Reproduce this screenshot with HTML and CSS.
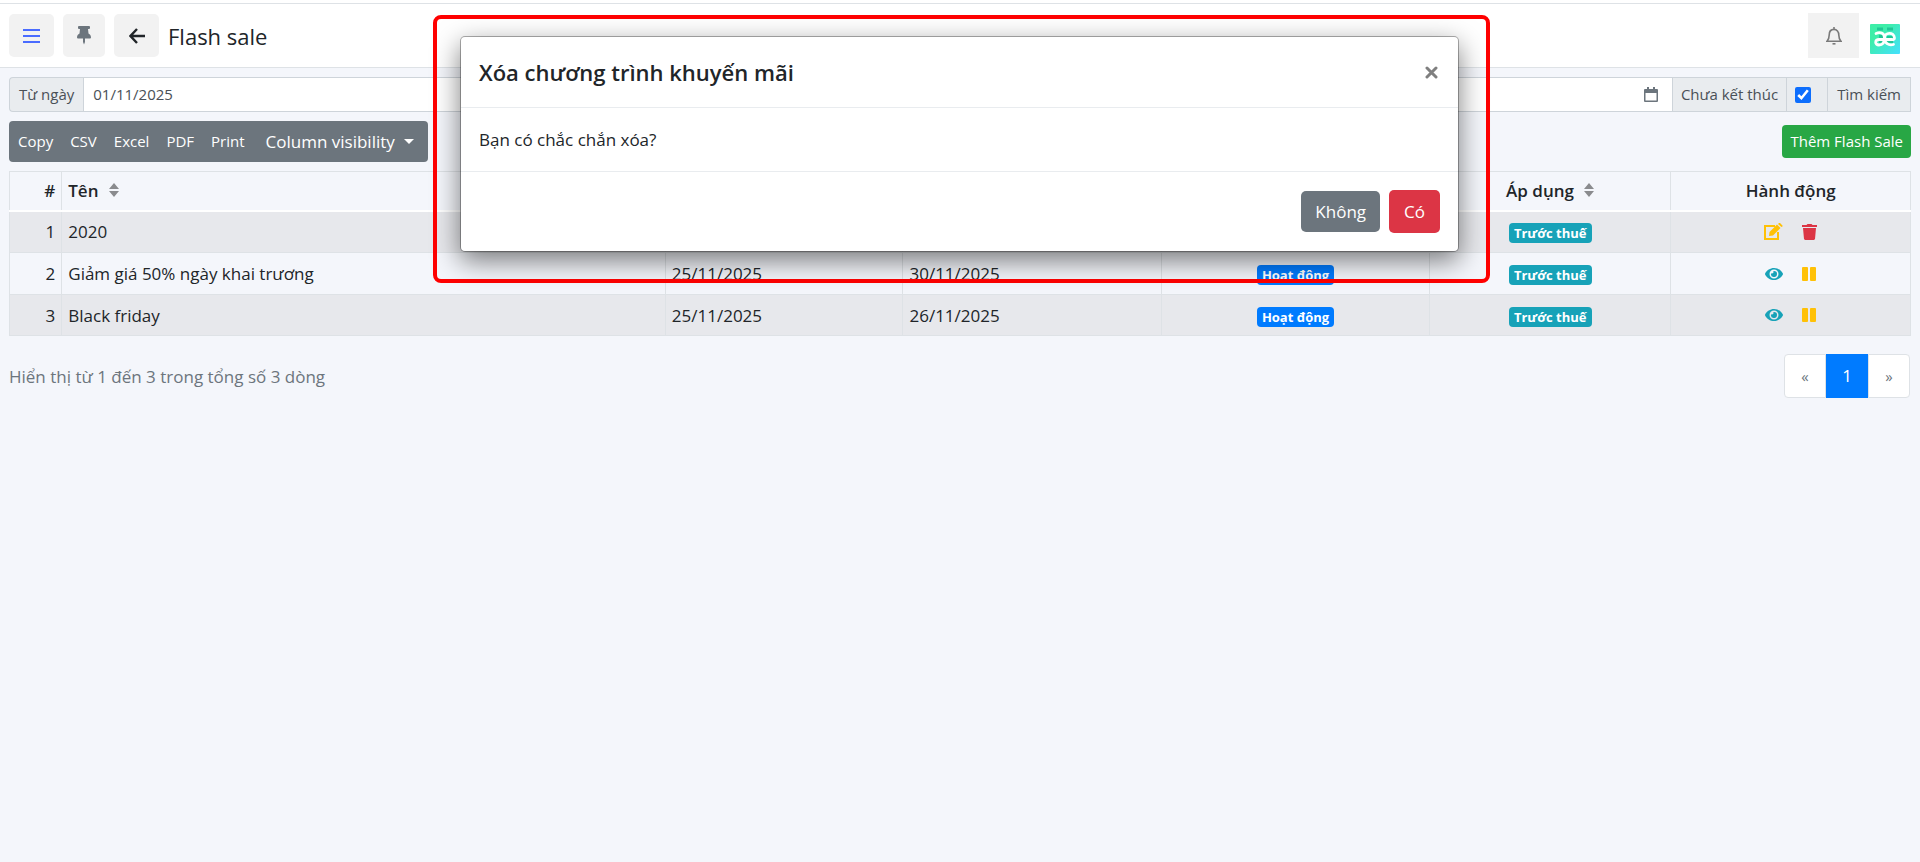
FILE: index.html
```
<!DOCTYPE html>
<html lang="vi">
<head>
    <meta charset="UTF-8">
    <meta name="viewport" content="width=device-width, initial-scale=1.0">
    <title>Flash sale</title>
    <link rel="stylesheet" href="styles.css">
</head>
<body>

<svg class="sprite" aria-hidden="true">
    <symbol id="icon-sort" viewBox="0 0 10 14">
        <path d="M5 0l5 6H0zM5 14l5-6H0z"/>
    </symbol>
    <symbol id="icon-eye" viewBox="0 0 576 512">
        <path d="M572.5 241.4C518.3 135.6 410.9 64 288 64S57.7 135.6 3.5 241.4a32.4 32.4 0 0 0 0 29.2C57.7 376.4 165.1 448 288 448s230.3-71.6 284.5-177.4a32.4 32.4 0 0 0 0-29.2zM288 400a144 144 0 1 1 144-144 143.9 143.9 0 0 1-144 144zm0-240a95.3 95.3 0 0 0-25.3 3.8 47.9 47.9 0 0 1-66.9 66.9A95.8 95.8 0 1 0 288 160z"/>
    </symbol>
    <symbol id="icon-pause" viewBox="0 0 14 14">
        <rect width="6" height="14" rx="1"/>
        <rect x="8" width="6" height="14" rx="1"/>
    </symbol>
</svg>

<header class="topbar">
    <button type="button" class="icon-btn menu-btn" aria-label="Menu">
        <svg width="17" height="16" viewBox="0 0 17 16"><path d="M0 2h17M0 8h17M0 14h17" stroke="#4a6cff" stroke-width="2"/></svg>
    </button>
    <button type="button" class="icon-btn pin-btn" aria-label="Ghim">
        <svg width="14" height="19" viewBox="0 0 14 19"><path d="M2 0h10a1 1 0 0 1 1 1v1a1 1 0 0 1-1 1h-1l.5 4.500C13 8.300 14 9.700 14 11.500a1 1 0 0 1-1 1H8V16l-1 2.500L6 16v-3.500H1a1 1 0 0 1-1-1C0 9.700 1 8.300 2.500 7.500L3 3H2a1 1 0 0 1-1-1V1a1 1 0 0 1 1-1z"/></svg>
    </button>
    <button type="button" class="icon-btn back-btn" aria-label="Quay lại">
        <svg class="outline" width="16" height="16" viewBox="0 0 16 16" stroke-width="2.4"><path d="M8 1L1.500 8 8 15M1.500 8H16"/></svg>
    </button>
    <h1 class="page-title">Flash sale</h1>
    <div class="topbar-right">
        <button type="button" class="icon-btn bell-btn" aria-label="Thông báo">
            <svg class="outline" width="16" height="18" viewBox="0 0 16 18" stroke-width="1.6"><path d="M8 0v2M1 14.200h14c-1.500-1.500-2.200-2.700-2.200-6.200 0-3.400-2-5.600-4.800-5.600S3.200 4.600 3.200 8c0 3.500-.7 4.700-2.200 6.200z"/><path d="M6.500 16.800h3"/></svg>
        </button>
        <a href="#" class="avatar" aria-label="Tài khoản">
            <svg width="30" height="30" viewBox="0 0 30 30">
                <defs>
                    <linearGradient id="avatar-bg" x1="0" y1="0" x2="1" y2="1">
                        <stop offset="0.3" stop-color="#3deea8"/>
                        <stop offset="1" stop-color="#45e0ff"/>
                    </linearGradient>
                </defs>
                <rect width="30" height="30" rx="1" fill="url(#avatar-bg)"/>
                <path d="M7 3.500h6v3H7zM17 3.500h6v3h-6zM9 11h4v8H9zM17 12h6v7h-6z" fill="#1fc795"/>
                <g fill="none" stroke="#fff" stroke-width="2.800" stroke-linecap="round">
                    <path d="M6 9.500c5-2 8.500 0 8.500 4.500 0 4.500-2 7-5.500 7-4.500 0-4.500-5.500.5-5.500h12"/>
                    <path d="M14.500 14c0-6 9.500-6.500 10 0 0 2-2 1.800-4 1.500M14.500 14c0 5 4 8 9 6.500"/>
                </g>
            </svg>
        </a>
    </div>
</header>

<main class="content">
    <form class="filter">
        <label class="addon addon-first" for="from-date">Từ ngày</label>
        <input type="text" id="from-date" class="filter-input" value="01/11/2025">
        <label class="filter-end">
            <input type="text" class="filter-input" aria-label="Đến ngày">
            <svg class="calendar" width="14" height="16" viewBox="0 0 14 16"><path d="M0 3a1 1 0 0 1 1-1h2V0h2v2h4V0h2v2h2a1 1 0 0 1 1 1v11a1 1 0 0 1-1 1H1a1 1 0 0 1-1-1zM1.500 6v7.500h11V6z" fill-rule="evenodd"/></svg>
        </label>
        <label class="addon" for="not-ended">Chưa kết thúc</label>
        <span class="addon addon-check"><input type="checkbox" id="not-ended" checked></span>
        <button type="submit" class="addon addon-last">Tìm kiếm</button>
    </form>

    <div class="toolbar">
        <div class="btn-group">
            <button type="button">Copy</button>
            <button type="button">CSV</button>
            <button type="button">Excel</button>
            <button type="button">PDF</button>
            <button type="button">Print</button>
            <button type="button" class="colvis">Column visibility</button>
        </div>
        <button type="button" class="btn-add">Thêm Flash Sale</button>
    </div>

    <table class="data-table">
        <colgroup>
            <col class="col-id">
            <col class="col-name">
            <col class="col-start">
            <col class="col-end">
            <col class="col-status">
            <col class="col-apply">
            <col class="col-action">
        </colgroup>
        <thead>
            <tr>
                <th class="num">#</th>
                <th>Tên <svg class="sort"><use href="#icon-sort"/></svg></th>
                <th></th>
                <th></th>
                <th></th>
                <th class="center">Áp dụng <svg class="sort"><use href="#icon-sort"/></svg></th>
                <th class="center">Hành động</th>
            </tr>
        </thead>
        <tbody>
            <tr>
                <td class="num">1</td>
                <td>2020</td>
                <td></td>
                <td></td>
                <td></td>
                <td class="center"><span class="badge badge-info">Trước thuế</span></td>
                <td>
                    <div class="actions">
                        <a href="#" class="warning" aria-label="Sửa"><svg width="19" height="17" viewBox="0 0 19 17"><path d="M11 3H1v13h13V9" fill="none" stroke="currentColor" stroke-width="2"/><path d="M5 13l.5-4L13 1.500 16.500 5 9 12.500zM14 1l1-1h1l2.500 2.500v1L17.500 4z"/></svg></a>
                        <a href="#" class="danger" aria-label="Xóa"><svg width="15" height="16" viewBox="0 0 15 16"><path d="M0 1h4.500l1-1h4l1 1H15v2H0zM1 4h13l-1 11-1 1H3l-1-1z"/></svg></a>
                    </div>
                </td>
            </tr>
            <tr>
                <td class="num">2</td>
                <td>Giảm giá 50% ngày khai trương</td>
                <td>25/11/2025</td>
                <td>30/11/2025</td>
                <td class="center"><span class="badge badge-primary">Hoạt động</span></td>
                <td class="center"><span class="badge badge-info">Trước thuế</span></td>
                <td>
                    <div class="actions">
                        <a href="#" class="info" aria-label="Xem"><svg width="18" height="16"><use href="#icon-eye"/></svg></a>
                        <a href="#" class="warning" aria-label="Tạm dừng"><svg width="14" height="14"><use href="#icon-pause"/></svg></a>
                    </div>
                </td>
            </tr>
            <tr>
                <td class="num">3</td>
                <td>Black friday</td>
                <td>25/11/2025</td>
                <td>26/11/2025</td>
                <td class="center"><span class="badge badge-primary">Hoạt động</span></td>
                <td class="center"><span class="badge badge-info">Trước thuế</span></td>
                <td>
                    <div class="actions">
                        <a href="#" class="info" aria-label="Xem"><svg width="18" height="16"><use href="#icon-eye"/></svg></a>
                        <a href="#" class="warning" aria-label="Tạm dừng"><svg width="14" height="14"><use href="#icon-pause"/></svg></a>
                    </div>
                </td>
            </tr>
        </tbody>
    </table>

    <div class="table-footer">
        <p>Hiển thị từ 1 đến 3 trong tổng số 3 dòng</p>
        <nav class="pagination">
            <a href="#" class="page-arrow">«</a>
            <a href="#" class="active">1</a>
            <a href="#" class="page-arrow">»</a>
        </nav>
    </div>
</main>

<div class="overlay">
    <div class="highlight">
        <div class="modal" role="dialog" aria-labelledby="modal-title">
            <div class="modal-header">
                <h2 id="modal-title">Xóa chương trình khuyến mãi</h2>
                <button type="button" class="close" aria-label="Đóng">
                    <svg width="13" height="13" viewBox="0 0 13 13"><path d="M2 2l9 9M11 2l-9 9" stroke="#7f7f7f" stroke-width="3" stroke-linecap="round"/></svg>
                </button>
            </div>
            <div class="modal-body">Bạn có chắc chắn xóa?</div>
            <div class="modal-footer">
                <button type="button" class="btn btn-secondary">Không</button>
                <button type="button" class="btn btn-danger">Có</button>
            </div>
        </div>
    </div>
</div>

</body>
</html>
```
FILE: styles.css
```
* {
    box-sizing: border-box;
}
body {
    margin: 0;
    font-family: 'Open Sans', 'Noto Sans', sans-serif;
    font-size: 17px;
    line-height: 25px;
    color: #212529;
    background: #f4f6fb;
}
button, input {
    font-family: inherit;
    font-size: inherit;
    line-height: inherit;
    color: inherit;
}
button {
    border: none;
    padding: 0;
    cursor: pointer;
}
a {
    color: inherit;
    text-decoration: none;
}
svg {
    display: block;
    fill: currentColor;
}
.outline {
    fill: none;
    stroke: currentColor;
}
.sprite {
    position: absolute;
    width: 0;
    height: 0;
}

/* Top bar */
.topbar {
    display: flex;
    align-items: center;
    height: 65px;
    margin-top: 3px;
    padding: 0 9px;
    background: #fff;
    border-top: 1px solid #dee2e6;
    border-bottom: 1px solid #dee2e6;
}
body::before {
    content: "";
    display: block;
    height: 3px;
    margin-bottom: -3px;
    background: #fff;
}
.icon-btn {
    display: flex;
    align-items: center;
    justify-content: center;
    height: 43px;
    border-radius: 5px;
    background: #f2f2f2;
}
.menu-btn {
    width: 45px;
}
.pin-btn {
    width: 42px;
    margin: 0 9px;
    color: #6c757d;
}
.back-btn {
    width: 45px;
}
.page-title {
    margin: 0 0 0 9px;
    font-size: 22px;
    font-weight: 400;
    line-height: 32px;
}
.topbar-right {
    display: flex;
    align-items: center;
    margin-left: auto;
    padding-right: 2px;
}
.bell-btn {
    width: 51px;
    height: 45px;
    border-radius: 0;
    color: #7a7a7a;
}
.avatar {
    margin: 7px 9px 0 11px;
}

/* Filter row */
.content {
    padding: 9px;
}
.filter {
    display: flex;
    height: 35px;
    font-size: 15px;
    color: #495057;
}
.addon {
    display: flex;
    align-items: center;
    padding: 0 8px;
    background: #e9ecef;
    border: 1px solid #ced4da;
    border-right: none;
    white-space: nowrap;
}
.addon-first {
    padding: 0 9px;
    border-radius: 4px 0 0 4px;
}
.addon-last {
    padding: 0 9px;
    border-right: 1px solid #ced4da;
}
.addon-check {
    width: 41px;
}
.addon-check input {
    width: 16px;
    height: 16px;
    margin: 0;
    accent-color: #0d6efd;
}
.filter-input {
    flex: 1;
    width: 100%;
    min-width: 0;
    padding: 0 9px;
    background: #fff;
    border: 1px solid #ced4da;
    border-right: none;
}
.filter-end {
    flex: 1;
    display: flex;
    position: relative;
}
.calendar {
    position: absolute;
    top: 10px;
    right: 14px;
    color: #6c757d;
}

/* Toolbar */
.toolbar {
    display: flex;
    align-items: center;
    justify-content: space-between;
    margin: 9px 0;
}
.btn-group {
    display: flex;
    align-items: center;
    height: 41px;
    padding-right: 4px;
    border-radius: 4px;
    background: #6c757d;
}
.btn-group button {
    padding: 0 8px 0 9px;
    background: none;
    color: #fff;
    font-size: 15px;
}
.btn-group .colvis {
    display: flex;
    align-items: center;
    gap: 9px;
    padding-left: 13px;
    padding-right: 10px;
    font-size: 17px;
}
.colvis::after {
    content: "";
    border-top: 5px solid #fff;
    border-left: 5px solid transparent;
    border-right: 5px solid transparent;
}
.btn-add {
    padding: 4px 8px;
    border-radius: 4px;
    background: #28a745;
    color: #fff;
    font-size: 15px;
}

/* Table */
.data-table {
    width: 100%;
    table-layout: fixed;
    border-collapse: collapse;
}
.col-id { width: 2.75%; }
.col-name { width: 31.75%; }
.col-start { width: 12.5%; }
.col-end { width: 13.6%; }
.col-status { width: 14.1%; }
.col-apply { width: 12.7%; }
.col-action { width: 12.6%; }
.data-table th,
.data-table td {
    height: 42px;
    padding: 0 6px;
    border: 1px solid #dee2e6;
    text-align: left;
}
.data-table tr:last-child td {
    height: 41px;
}
.data-table th {
    height: 39px;
    font-weight: 600;
    border-bottom: 2px solid #fff;
}
.data-table tbody tr:nth-child(odd) {
    background: #e7e8ec;
}
.data-table .num {
    text-align: right;
}
.data-table .center {
    text-align: center;
}
.sort {
    display: inline-block;
    width: 10px;
    height: 14px;
    margin-left: 6px;
    color: #8a8b8e;
}
.badge {
    display: inline-block;
    padding: 0 5px;
    border-radius: 4px;
    color: #fff;
    font-size: 13px;
    font-weight: 700;
    line-height: 20px;
}
.badge-info {
    background: #17a2b8;
}
.badge-primary {
    background: #007bff;
}
.actions {
    display: flex;
    align-items: center;
    justify-content: center;
    gap: 19px;
}
.warning { color: #ffc107; }
.danger { color: #dc3545; }
.info { color: #17a2b8; }

/* Footer */
.table-footer {
    display: flex;
    align-items: center;
    justify-content: space-between;
    margin-top: 18px;
    color: #6c757d;
}
.table-footer p {
    margin: 0;
}
.pagination {
    display: flex;
    margin-right: 1px;
}
.pagination a {
    width: 42px;
    height: 44px;
    border: 1px solid #dee2e6;
    background: #fff;
    text-align: center;
    line-height: 42px;
}
.pagination .page-arrow {
    font-size: 15px;
}
.pagination a:first-child {
    border-radius: 4px 0 0 4px;
}
.pagination a:last-child {
    border-radius: 0 4px 4px 0;
}
.pagination .active {
    border-color: #007bff;
    background: #007bff;
    color: #fff;
}

/* Modal */
.overlay {
    position: absolute;
    top: 15px;
    left: 3px;
    right: 0;
    display: flex;
    justify-content: center;
}
.highlight {
    width: 1057px;
    padding: 17px 27px 27px 23px;
    border: 4px solid #f00;
    border-radius: 8px;
}
.modal {
    border: 1px solid rgba(0, 0, 0, 0.3);
    border-radius: 5px;
    background: #fff;
    background-clip: padding-box;
    box-shadow: 0 9px 27px rgba(0, 0, 0, 0.5);
}
.modal-header {
    display: flex;
    align-items: center;
    justify-content: space-between;
    padding: 19px 20px 19px 18px;
    border-bottom: 1px solid #e9ecef;
}
.modal-header h2 {
    margin: 0;
    font-size: 22px;
    font-weight: 600;
    line-height: 32px;
}
.close {
    background: none;
}
.modal-body {
    padding: 19px 18px;
}
.modal-footer {
    display: flex;
    align-items: center;
    justify-content: flex-end;
    gap: 9px;
    padding: 18px;
    border-top: 1px solid #e9ecef;
}
.btn {
    padding: 8px 14px;
    border-radius: 5px;
    color: #fff;
}
.btn-secondary {
    background: #6c757d;
}
.btn-danger {
    padding: 9px 15px;
    background: #dc3545;
}
```
